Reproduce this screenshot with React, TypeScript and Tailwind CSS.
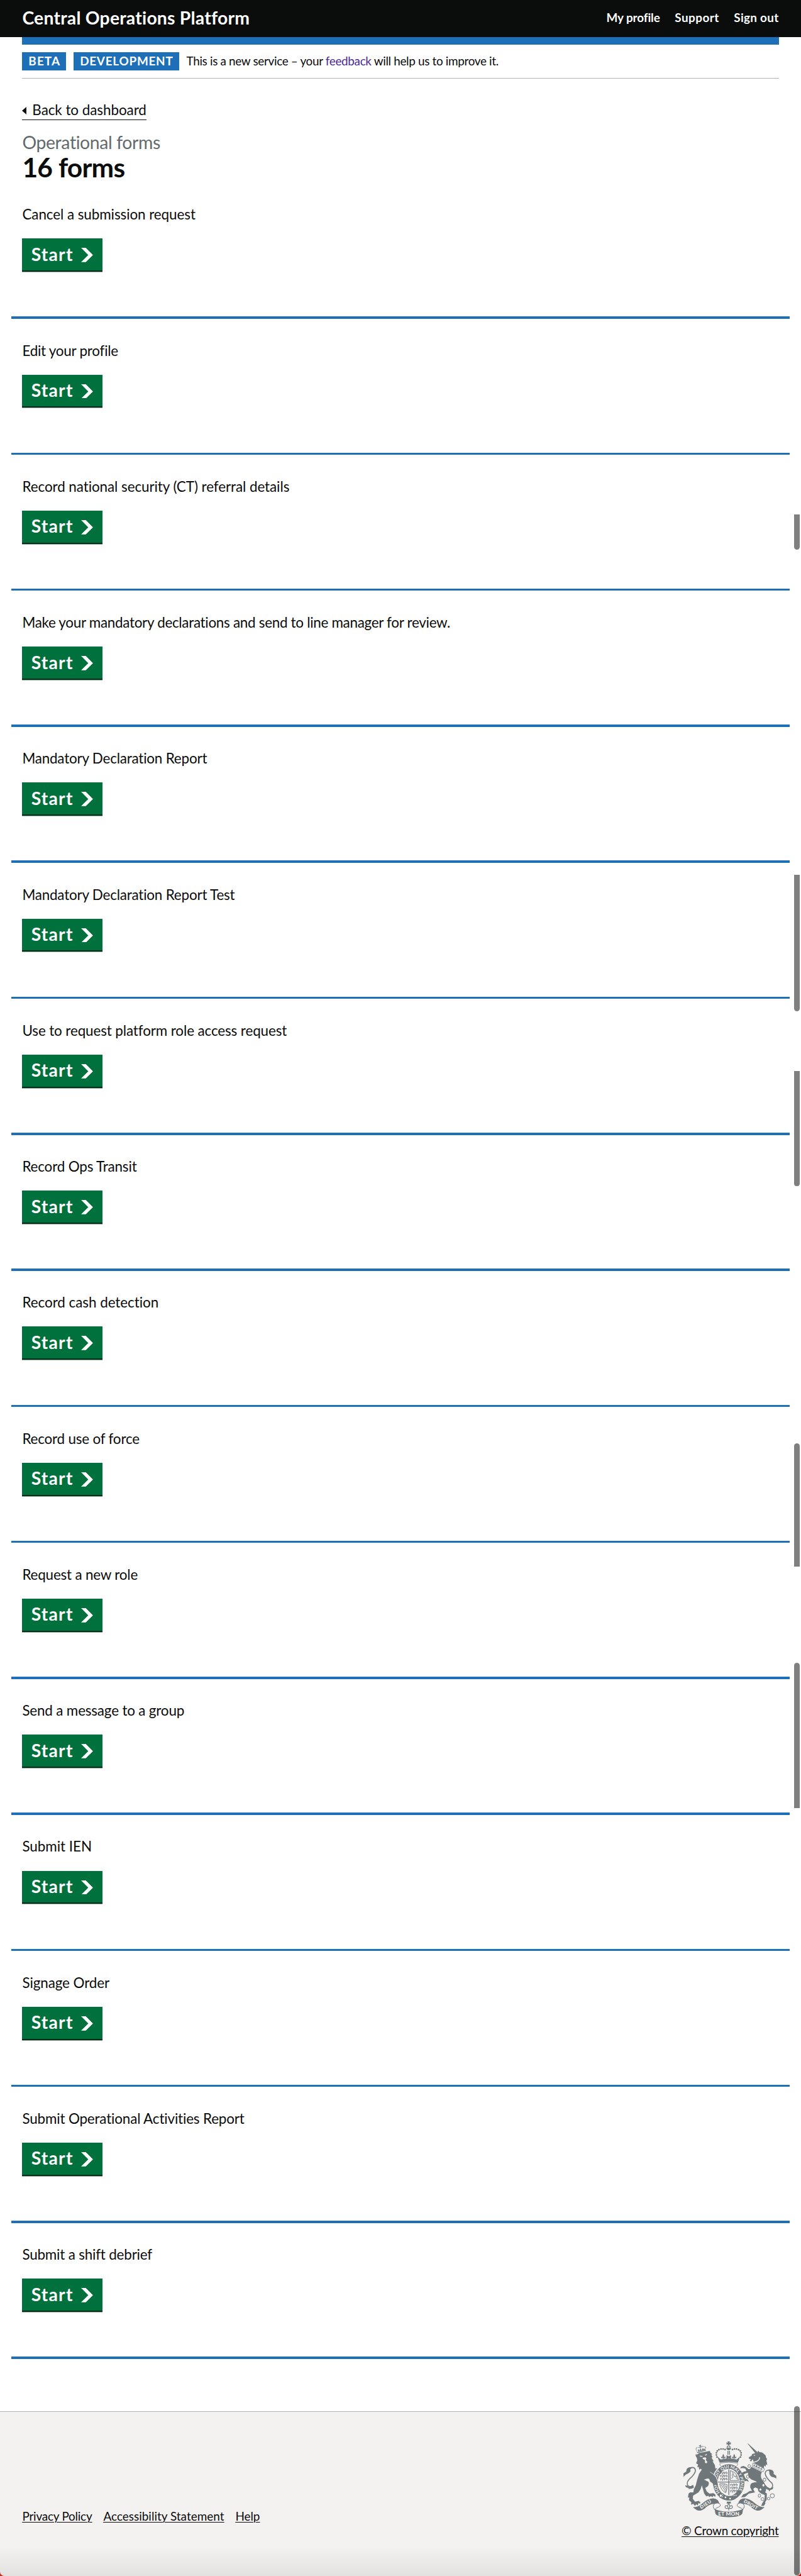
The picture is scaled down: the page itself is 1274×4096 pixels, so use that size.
const forms: { label: string; tracking: string }[] = [
  { label: "Cancel a submission request", tracking: "tracking-[-0.08px]" },
  { label: "Edit your profile", tracking: "tracking-[-0.25px]" },
  { label: "Record national security (CT) referral details", tracking: "tracking-[-0.08px]" },
  { label: "Make your mandatory declarations and send to line manager for review.", tracking: "tracking-[-0.3px]" },
  { label: "Mandatory Declaration Report", tracking: "tracking-[-0.2px]" },
  { label: "Mandatory Declaration Report Test", tracking: "tracking-[-0.2px]" },
  { label: "Use to request platform role access request", tracking: "tracking-[-0.12px]" },
  { label: "Record Ops Transit", tracking: "tracking-[-0.17px]" },
  { label: "Record cash detection", tracking: "tracking-[-0.05px]" },
  { label: "Record use of force", tracking: "tracking-[-0.2px]" },
  { label: "Request a new role", tracking: "tracking-[-0.2px]" },
  { label: "Send a message to a group", tracking: "tracking-[-0.18px]" },
  { label: "Submit IEN", tracking: "tracking-[-0.05px]" },
  { label: "Signage Order", tracking: "tracking-[-0.1px]" },
  { label: "Submit Operational Activities Report", tracking: "tracking-[-0.17px]" },
  { label: "Submit a shift debrief", tracking: "tracking-[-0.2px]" },
];

function Header() {
  return (
    <header className="h-[59.1px] bg-[#0b0c0c] text-white">
      <div className="mx-[35.45px] flex h-14 items-center justify-between font-bold">
        <a className="text-[28.36px] leading-8 tracking-[0.2px]">Central Operations Platform</a>
        <nav className="flex gap-[23.6px] text-[18.9px] leading-6">
          <a className="tracking-[-0.1px]">My profile</a>
          <a className="tracking-[0.45px]">Support</a>
          <a className="tracking-[0.3px]">Sign out</a>
        </nav>
      </div>
    </header>
  );
}

function PhaseBanner() {
  return (
    <div className="mx-[35.45px]">
      <div className="h-[11.8px] bg-[#1d70b8]" />
      <div className="flex h-[54.2px] items-center border-b border-[#b1b4b6] text-[18.9px]">
        <strong className="flex h-[29.5px] w-[69.7px] items-center justify-center bg-[#1d70b8] pb-px pl-px leading-6 tracking-[1.1px] text-white">
          BETA
        </strong>
        <strong className="ml-[11.8px] flex h-[29.5px] w-[167.8px] items-center justify-center bg-[#1d70b8] pb-px pl-px leading-6 tracking-[0.75px] text-white">
          DEVELOPMENT
        </strong>
        <span className="ml-[11.8px] pb-px leading-6 tracking-[-0.33px] whitespace-nowrap">
          This is a new service – your <a className="text-[#4c2c92]">feedback</a> will help us to improve it.
        </span>
      </div>
    </div>
  );
}

function StartButton() {
  return (
    <button className="flex h-[50.8px] w-[127.6px] items-center justify-between bg-[#00703c] pr-[15.4px] pl-[14.2px] text-[28.36px] font-bold text-white shadow-[0_2.4px_0_#002d18]">
      <span className="pb-0.5 leading-8 tracking-[1.2px]">Start</span>
      <svg viewBox="0 0 33 40" className="mt-0.5 h-[22.8px] w-[18.9px]" fill="currentColor">
        <path d="M0 0h13l20 20-20 20H0l20-20z" />
      </svg>
    </button>
  );
}

function Rosette({ x }: { x: number }) {
  return (
    <g transform={`translate(${x} 514)`}>
      <path d="M0 -22 Q12 -6 4 12 L0 20 L-4 12 Q-12 -6 0 -22Z" />
      <path d="M-5 12 Q-20 14 -17 -1 Q-8 -2 -4 8Z M5 12 Q20 14 17 -1 Q8 -2 4 8Z" />
    </g>
  );
}

function Squiggles({ x, y }: { x: number; y: number }) {
  return (
    <g transform={`translate(${x} ${y})`} fill="none" stroke="currentColor" strokeWidth="5">
      {[0, 25, 50].map((dy) => (
        <path
          key={dy}
          transform={`translate(0 ${dy})`}
          d="M0 4 L8 8 L12 1 L20 9 L42 7 L50 1 L60 5 M10 9 L4 18 M20 9 L24 19 L17 20 M40 8 L36 19 M46 8 L58 17 M54 2 L62 14 M26 2 L38 3"
        />
      ))}
    </g>
  );
}

function RibbonHalf() {
  return (
    <g>
      <path d="M256 922 Q300 922 330 893 Q375 852 420 850 Q462 852 470 892 Q452 884 432 894 Q385 896 352 932 Q312 960 284 942 Z" />
      <path
        d="M432 892 Q408 914 434 942 M432 892 Q456 880 472 892 Q488 914 460 922 Q440 930 432 940"
        fill="none"
        stroke="currentColor"
        strokeWidth="5"
      />
    </g>
  );
}

function Crest() {
  return (
    <svg viewBox="180 390 750 612" className="h-[120.5px] w-[147.7px] text-[#6f777b]" fill="currentColor">
      {/* lion */}
      <g transform="translate(168 372)">
        <path d="M136 112 L228 94 L226 104 L246 122 L236 124 L248 146 L238 147 L256 178 L247 178 L266 208 L270 238 L286 234 L264 266 L252 292 L268 308 L288 350 L280 374 L270 366 L262 376 L252 360 L240 350 L228 342 L220 320 L206 318 L178 326 L214 344 Q224 364 206 382 L188 394 L200 422 L222 440 L256 436 L272 450 L268 466 L256 456 L246 468 L234 460 L220 468 L212 456 L198 462 L180 440 L172 412 L160 372 L152 402 L134 430 L90 456 L88 482 L106 504 L136 498 L150 512 L144 522 L134 514 L128 536 L116 526 L104 538 L92 522 L74 530 L76 510 L56 492 L60 472 L48 470 L54 438 L66 430 L92 430 L96 404 L112 372 L122 330 L138 280 L160 246 L152 238 L140 246 L136 224 L124 228 L130 204 L114 196 L124 172 L120 150 L112 138 L110 124 L128 122 Z" />
        <path
          d="M94 380 Q58 392 45 370 Q36 346 62 320 Q104 284 109 256 Q108 228 84 228 Q68 230 60 246"
          fill="none"
          stroke="currentColor"
          strokeWidth="8"
        />
        <path d="M84 225 Q48 224 38 242 L34 262 L12 276 L13 306 Q26 284 48 278 Q78 262 66 244 Z" />
        <path d="M26 372 L44 376 L58 386 L90 368 L96 392 Q76 404 48 400 L58 396 L32 388Z" />
        <path d="M142 132 L170 137 L160 143 L146 140Z M184 128 L200 118 L202 126 L190 132Z" fill="#f3f2f1" />
        <path d="M166 150 L190 146 L198 156 L192 166 L206 184 Q196 202 186 188 L186 168 L170 160Z" fill="#f3f2f1" />
        <path d="M120 104 L194 86 L196 92 L124 112Z M128 98 L132 78 L140 92 L150 74 L158 90 L170 70 L176 84 L186 72 L190 86Z" />
        <path
          d="M118 94 Q106 68 130 66 Q142 64 150 72 Q160 54 180 60 Q198 66 192 80"
          fill="none"
          stroke="currentColor"
          strokeWidth="7"
          strokeLinecap="round"
          strokeDasharray="0 10"
        />
        <path d="M138 50 L158 60 M152 46 L144 66" stroke="currentColor" strokeWidth="6" />
      </g>

      {/* royal crown */}
      <path d="M536 390 H555 L550 401 L563 396 V416 L550 411 L555 423 H536 L541 411 L528 416 V396 L541 401Z" />
      <path d="M527 438 Q532 427 542 424 V438Z M549 424 Q560 427 564 438 H549Z M526 442 H565 Q562 461 546 461 Q530 461 526 442Z" />
      <path
        d="M451 516 Q434 472 470 455 Q500 444 528 462 M641 516 Q658 472 622 455 Q592 444 564 462"
        fill="none"
        stroke="currentColor"
        strokeWidth="14"
        strokeLinecap="round"
        strokeDasharray="0 17"
      />
      <path d="M536 466 H543 V498 H536Z M549 466 H556 V498 H549Z" />
      <path d="M528 500 L546 510 L564 500 V536 L546 524 L528 536Z" />
      <Rosette x={502} />
      <Rosette x={590} />
      <path d="M454 512 L482 536 Q546 522 610 536 L638 512 L620 562 Q546 548 472 562Z" />
      <path
        d="M482 588 Q466 572 482 564 Q546 552 610 564 Q626 572 610 588"
        fill="none"
        stroke="currentColor"
        strokeWidth="4"
      />

      {/* garter */}
      <ellipse cx="546" cy="721" rx="108" ry="128" fill="#f3f2f1" stroke="currentColor" strokeWidth="37" />
      <path id="motto" d="M478 803 A96 116 0 1 1 614 803" fill="none" />
      <text fontSize="35" fontWeight="bold" fill="#f3f2f1" fontFamily="Lato, sans-serif">
        <textPath href="#motto" startOffset="2" textLength="486">
          HONI SOIT QUI MAL Y PENSE
        </textPath>
      </text>
      <path d="M543 616 H550 V826 H543Z M457 715 H636 V721 H457Z" />
      <Squiggles x={474} y={636} />
      <Squiggles x={556} y={732} />
      <path
        d="M558 706 V626 Q612 636 626 706Z M566 690 L580 680 L572 660 L582 654 L592 674 L608 668 L606 684 L618 698 M570 642 L586 648"
        fill="none"
        stroke="currentColor"
        strokeWidth="5"
      />
      <path
        d="M472 732 Q500 726 532 738 Q534 780 522 804 Q486 790 472 732Z M484 738 L522 796 M496 736 L527 782 M508 736 L530 764"
        fill="none"
        stroke="currentColor"
        strokeWidth="5"
      />
      <path d="M480 806 L500 812 Q540 846 612 842 L590 860 Q546 878 488 850Z" />
      <g fill="#f3f2f1">
        <circle cx="520" cy="842" r="7" />
        <circle cx="557" cy="852" r="7" />
      </g>
      <circle cx="488" cy="828" r="17" fill="#f3f2f1" stroke="currentColor" strokeWidth="6" />
      <path d="M476 812 L500 828 L478 844" fill="none" stroke="currentColor" strokeWidth="6" />
      <path d="M506 812 Q556 834 612 826" fill="none" stroke="#f3f2f1" strokeWidth="4" />
      {/* forepaw resting on the garter */}
      <path d="M396 640 Q440 664 450 700 L458 736 L448 748 L438 738 L424 750 L416 728 L400 716Z" />
      <path d="M396 638 Q442 662 454 700 L460 738" fill="none" stroke="#f3f2f1" strokeWidth="4" />

      {/* unicorn */}
      <g transform="translate(540 372)">
        <path d="M155 32 L164 37 L238 104 L222 116 Z" />
        <path d="M222 112 L238 106 L244 92 L254 104 Q282 104 290 120 Q308 128 306 146 L316 160 L310 170 L318 208 L306 203 L304 222 L292 212 L288 240 L274 226 L214 194 L208 186 L200 162 L186 180 L176 172 L188 162 L172 160 L168 146 L190 134 L196 120 Z" />
        <path d="M256 146 Q256 176 208 186" fill="none" stroke="#f3f2f1" strokeWidth="7" />
        <path d="M206 128 L222 128 L212 136Z" fill="#f3f2f1" />
        <path d="M202 192 L296 240 L284 264 L194 218 Z" fill="#f3f2f1" stroke="currentColor" strokeWidth="4" />
        <path d="M204 214 L212 202 L220 220 L232 208 L240 230 L252 220 L258 240 L272 232 L278 250Z" />
        <path
          d="M332 408 Q372 392 356 356 Q304 310 300 276 Q304 244 344 250"
          fill="none"
          stroke="currentColor"
          strokeWidth="8"
        />
        <path d="M326 246 Q362 242 370 268 L368 280 L390 296 L390 318 Q374 306 352 304 Q330 288 334 266Z" />
        <path d="M286 352 L318 386 L340 398 L368 388 L360 404 L342 410 L334 422 L328 410 L308 402Z" />
        <path d="M188 222 L274 266 Q258 292 272 322 L292 350 Q320 400 300 430 L314 438 L312 490 L300 508 L302 520 L290 538 L268 538 L276 518 L296 488 L296 450 Q262 440 246 420 L240 398 L222 390 Q206 394 204 404 L218 430 L168 440 L138 466 L106 470 L122 446 L150 436 L176 418 L194 418 L180 390 Q174 354 212 350 L234 346 L226 340 L186 324 L166 304 L160 270 L128 284 L132 296 L142 318 L160 326 L168 346 L150 336 L138 340 L126 318 L112 288 L104 276 L130 262 L150 258 L140 238 L118 232 L100 236 L104 222 L124 216 L148 226 L160 242 L178 240 Z" />
        <g fill="#f3f2f1">
          <ellipse cx="286" cy="372" rx="8" ry="10" />
          <ellipse cx="262" cy="407" rx="8" ry="9" />
        </g>
        <g fill="none" stroke="currentColor" strokeWidth="5">
          <ellipse cx="171" cy="217" rx="10" ry="12" />
          <ellipse cx="153" cy="243" rx="7" ry="9" />
          <ellipse cx="161" cy="302" rx="12" ry="13" />
          <ellipse cx="295" cy="327" rx="11" ry="13" />
          <ellipse cx="254" cy="456" rx="10" ry="13" />
          <ellipse cx="279" cy="484" rx="12" ry="12" />
          <ellipse cx="328" cy="480" rx="11" ry="10" />
          <circle cx="358" cy="457" r="17" />
        </g>
      </g>

      {/* ribbon */}
      <RibbonHalf />
      <g transform="translate(1092 0) scale(-1 1)">
        <RibbonHalf />
      </g>
      <path d="M432 936 Q488 958 546 958 Q604 958 662 936 L656 972 Q644 1001 546 1002 Q448 1001 438 972Z" />
      <path d="M530 876 H563 V892 H530Z" />
      <path
        d="M546 892 Q560 908 550 930 H542 Q532 908 546 892Z M538 930 Q516 936 516 918 Q520 902 534 914 M554 930 Q576 936 576 918 Q572 902 558 914 M546 930 V948"
        fill="none"
        stroke="currentColor"
        strokeWidth="6"
      />
      <g fill="#f3f2f1" fontFamily="Lato, sans-serif" fontWeight="900" fontSize="38">
        <text x="460" y="991" textLength="172" fontSize="42">
          ET MON
        </text>
        <text transform="translate(324 936) rotate(-33)" textLength="100">
          DIEU
        </text>
        <text transform="translate(664 880) rotate(30)" textLength="124">
          DROIT
        </text>
      </g>
    </svg>
  );
}

function Footer() {
  return (
    <footer className="relative h-[262.2px] overflow-hidden rounded-b-[7px] border-t border-[#b1b4b6] bg-[#f3f2f1]">
      <div className="absolute inset-x-0 bottom-0 h-12 bg-linear-to-b from-transparent to-black/7" />
      <div className="relative flex h-full items-end justify-between px-[35.45px] pb-[59.5px] text-[18.9px] leading-6">
        <nav className="mb-[23.3px] flex gap-[18px] underline decoration-1 underline-offset-2">
          <a className="tracking-[-0.21px]">Privacy Policy</a>
          <a className="tracking-[0.03px]">Accessibility Statement</a>
          <a className="tracking-[-0.1px]">Help</a>
        </nav>
        <div className="flex flex-col items-center gap-[9.7px]">
          <Crest />
          <a className="tracking-[-0.23px] underline decoration-1 underline-offset-2">© Crown copyright</a>
        </div>
      </div>
    </footer>
  );
}

const thumbs = [
  "top-[817.8px] h-[56px] rounded-b-[6px]",
  "top-[1391px] h-[217.4px] rounded-b-[6px]",
  "top-[1703px] h-[183.2px] rounded-b-[4px]",
  "top-[2295px] h-[196.3px] rounded-t-[6px]",
  "top-[2643.7px] h-[231.6px] rounded-t-[6px]",
  "top-[3825.5px] h-[269.5px] rounded-[6px]",
];

export default function App() {
  return (
    <div className="relative h-[4096px] w-[1274px] overflow-hidden bg-linear-to-r from-[#c62b1a] to-[#c80000] font-['Lato',sans-serif] text-[#0b0c0c]">
      <div className="bg-white">
        <Header />
        <PhaseBanner />
        <main className="pb-[82.7px]">
          <div className="mx-[35.45px] h-[165.6px] pt-[33px]">
            <a className="flex h-[33px] w-[197.4px] items-center border-b border-[#0b0c0c] text-[22.45px] leading-8 whitespace-nowrap">
              <svg viewBox="0 0 7 12" className="mt-1 mr-[9px] h-3 w-[7px]" fill="currentColor">
                <path d="M7 0v12L0 6z" />
              </svg>
              <span className="pt-0.5 tracking-[-0.06px]">Back to dashboard</span>
            </a>
            <h1 className="mt-[19.6px]">
              <span className="block text-[28.36px] leading-[30px] tracking-[-0.37px] text-[#626a6e]">Operational forms</span>
              <span className="mt-[0.8px] block text-[42.55px] leading-[50px] font-bold tracking-[-0.75px]">16 forms</span>
            </h1>
          </div>
          <ul>
            {forms.map((form) => (
              <li key={form.label} className="mx-[17.7px] flex h-[216.27px] flex-col justify-between">
                <div className="px-[17.75px] pt-[34.6px]">
                  <p className={`mb-[22.1px] text-[22.45px] leading-8 whitespace-nowrap ${form.tracking}`}>{form.label}</p>
                  <StartButton />
                </div>
                <div className="h-[3.54px] bg-[#1d70b8]" />
              </li>
            ))}
          </ul>
        </main>
      </div>
      <Footer />
      {thumbs.map((thumb) => (
        <div key={thumb} className={`absolute right-[2.4px] w-[8.3px] bg-black/50 ${thumb}`} />
      ))}
    </div>
  );
}
